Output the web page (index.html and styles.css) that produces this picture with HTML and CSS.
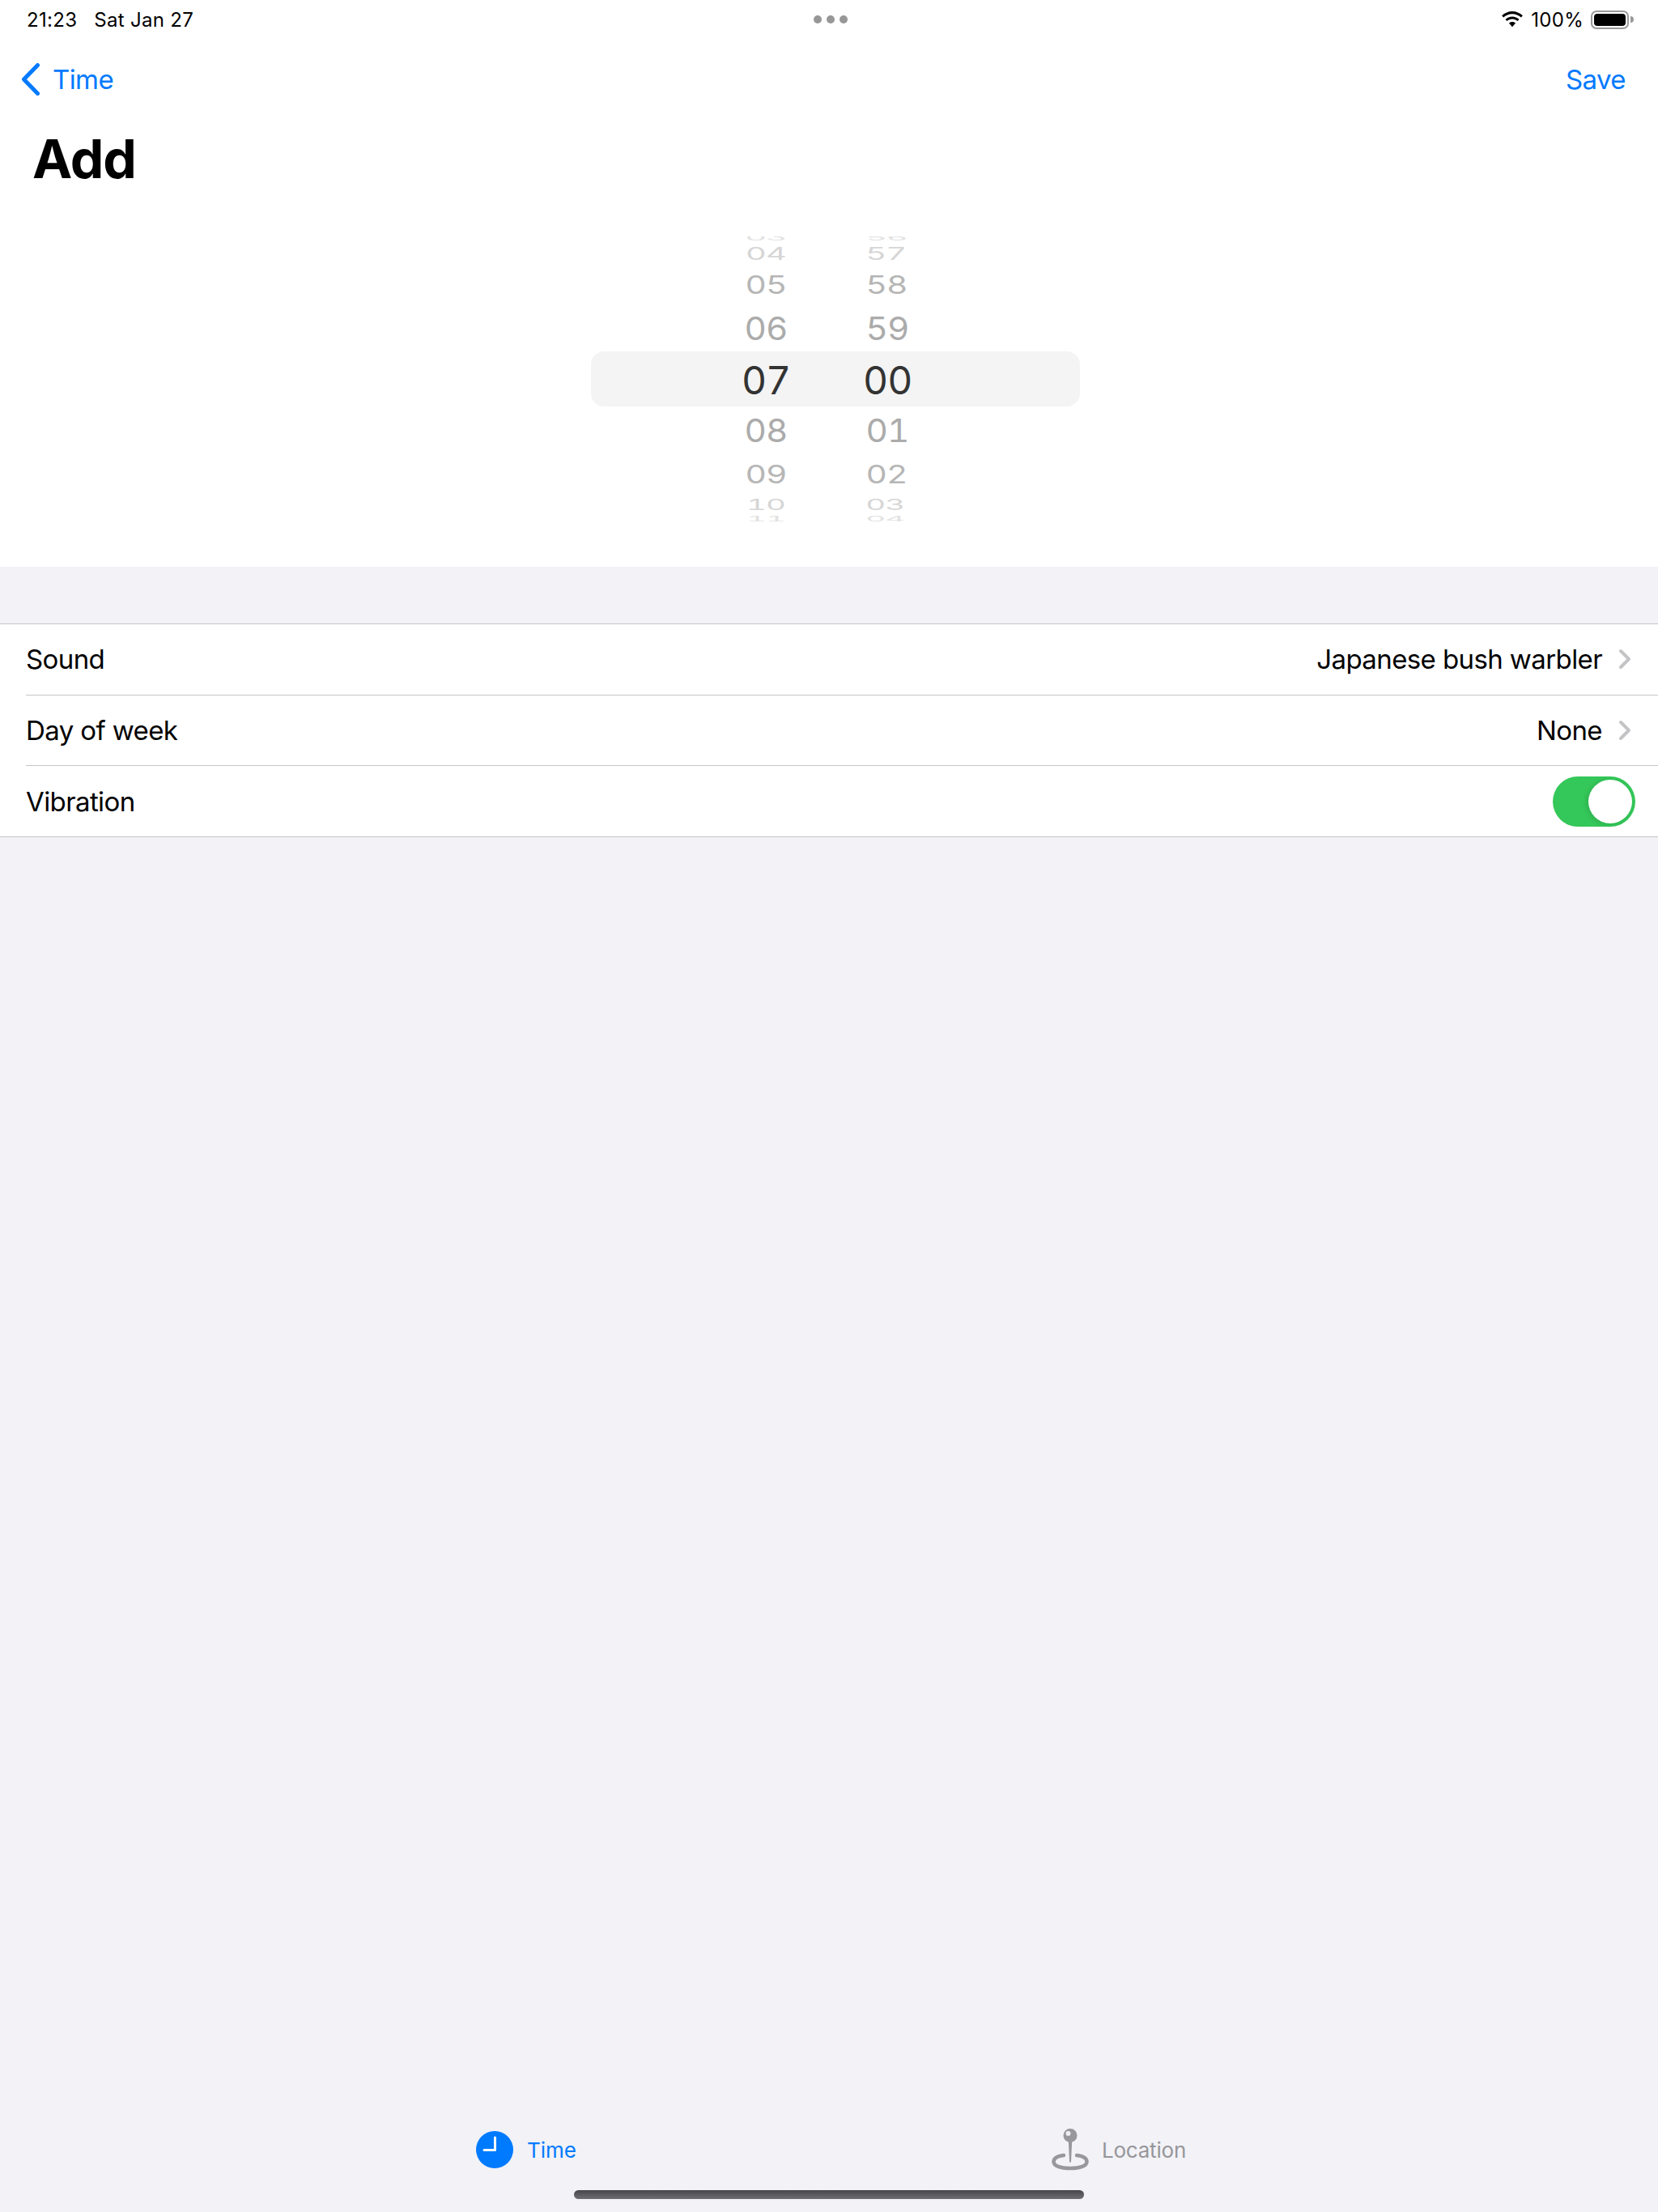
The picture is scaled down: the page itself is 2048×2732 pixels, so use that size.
FILE: index.html
```html
<!DOCTYPE html>
<html lang="en">
<head>
<meta charset="utf-8">
<title>Add</title>
<link rel="stylesheet" href="styles.css">
</head>
<body>
<div class="page">
  <header class="top">
    <div class="status">
      <div class="status-left"><span>21:23</span><span>Sat Jan 27</span></div>
      <div class="dots"><i></i><i></i><i></i></div>
      <div class="status-right">
        <svg class="wifi" width="28" height="20" viewBox="0 0 28 20"><path d="M14 3.200c4.200 0 8 1.600 10.900 4.300l2-2.200C23.300 2 18.900 0 14 0S4.700 2 1.100 5.300l2 2.200C6 4.800 9.800 3.200 14 3.200z"/><path d="M14 9.600c2.500 0 4.800 1 6.500 2.500l2-2.200C20.200 7.800 17.300 6.500 14 6.500s-6.200 1.300-8.500 3.400l2 2.200c1.700-1.500 4-2.500 6.500-2.500z"/><path d="M14 13c-1.600 0-3 .6-4.100 1.600L14 19.200l4.100-4.600C17 13.600 15.600 13 14 13z"/></svg>
        <span class="pct">100%</span>
        <div class="battery"><div class="battery-fill"></div></div>
        <div class="battery-nub"></div>
      </div>
    </div>
    <nav class="nav">
      <a class="nav-back">
        <svg class="back-icon" width="24" height="40" viewBox="0 0 24 40"><path d="M20.500 2.500L3.500 20l17 17.500" fill="none" stroke="#007aff" stroke-width="5" stroke-linecap="round" stroke-linejoin="round"/></svg>
        <span>Time</span>
      </a>
      <a class="nav-save">Save</a>
    </nav>
    <h1 class="title">Add</h1>
    <div class="picker">
      <div class="picker-band"></div>
      <div class="wheel wheel-hours">
        <div class="cell c0">03</div><div class="cell c1">04</div><div class="cell c2">05</div><div class="cell c3">06</div><div class="cell cur">07</div><div class="cell c4">08</div><div class="cell c5">09</div><div class="cell c6">10</div><div class="cell c7">11</div>
      </div>
      <div class="wheel wheel-mins">
        <div class="cell c0">56</div><div class="cell c1">57</div><div class="cell c2">58</div><div class="cell c3">59</div><div class="cell cur">00</div><div class="cell c4">01</div><div class="cell c5">02</div><div class="cell c6">03</div><div class="cell c7">04</div>
      </div>
    </div>
  </header>
  <main class="main">
    <section class="group">
      <div class="row">
        <span class="label">Sound</span>
        <span class="value">Japanese bush warbler</span>
        <svg class="chev" width="20" height="26" viewBox="0 0 20 26"><path d="M5 3l10 10L5 23" fill="none" stroke="#c4c4c7" stroke-width="4" stroke-linecap="round" stroke-linejoin="round"/></svg>
      </div>
      <div class="row">
        <span class="label">Day of week</span>
        <span class="value">None</span>
        <svg class="chev" width="20" height="26" viewBox="0 0 20 26"><path d="M5 3l10 10L5 23" fill="none" stroke="#c4c4c7" stroke-width="4" stroke-linecap="round" stroke-linejoin="round"/></svg>
      </div>
      <div class="row row-last">
        <span class="label">Vibration</span>
        <div class="toggle"><div class="knob"></div></div>
      </div>
    </section>
  </main>
  <footer class="tabs">
    <div class="tab tab-on">
      <svg width="46" height="46" viewBox="0 0 46 46"><circle cx="23" cy="23" r="23" fill="#007aff"/><path d="M23.500 8v15.500H10" fill="none" stroke="#fff" stroke-width="3" stroke-linecap="round" stroke-linejoin="round"/></svg>
      <span>Time</span>
    </div>
    <div class="tab">
      <svg width="46" height="52" viewBox="0 0 46 52"><path d="M15 33C7 34 2.500 37 2.500 41c0 5 8.500 8 20.500 8s20.500-3 20.500-8c0-4-4.500-7-12.500-8" fill="none" stroke="#98989c" stroke-width="4.500" stroke-linecap="round"/><path d="M20.800 15h4.400l-1.200 26q-1 1.500-2 0z" fill="#98989c"/><circle cx="23" cy="8.500" r="8.500" fill="#98989c"/><circle cx="20.500" cy="6" r="3" fill="#eeeef2"/></svg>
      <span class="tab-label">Location</span>
    </div>
  </footer>
  <div class="home-wrap"><div class="home"></div></div>
</div>
</body>
</html>
```
FILE: styles.css
```css
* { box-sizing: border-box; }
html, body { margin: 0; padding: 0; }
body { font-family: Inter, "Liberation Sans", sans-serif; color: #000; background: #f2f2f7; }
.page { width: 2048px; height: 2732px; display: flex; flex-direction: column; overflow: hidden; }

.top { background: #fff; height: 700px; flex: none; }

.status { height: 48px; display: flex; align-items: center; justify-content: space-between; padding: 0 30px 0 33px; font-size: 24px; letter-spacing: .3px; }
.status-left { display: flex; gap: 21px; width: 400px; }
.dots { display: flex; gap: 6px; }
.dots i { width: 10px; height: 10px; border-radius: 50%; background: #979797; }
.status-right { display: flex; align-items: center; width: 400px; justify-content: flex-end; }
.wifi { margin-right: 9px; }
.pct { margin-right: 9px; }
.battery { width: 47px; height: 23px; border: 2px solid #9a9a9a; border-radius: 7px; padding: 2px; }
.battery-fill { width: 100%; height: 100%; background: #000; border-radius: 4px; }
.battery-nub { width: 4px; height: 8px; margin-left: 2px; background: #9a9a9a; border-radius: 0 4px 4px 0; }

.nav { height: 100px; display: flex; align-items: center; justify-content: space-between; padding: 0 40px 0 26px; font-size: 33px; letter-spacing: -.6px; color: #007aff; }
.nav-back { display: flex; align-items: center; gap: 15px; }
.title { margin: 0 0 0 40px; height: 96px; line-height: 96px; font-size: 66px; font-weight: 700; letter-spacing: -1px; }

.picker { position: relative; margin: 48px 0 0 730px; width: 604px; height: 352px; display: flex; padding-left: 167px; gap: 71px; overflow: hidden; font-size: 48px; letter-spacing: -1px; font-variant-numeric: tabular-nums; }
.picker-band { position: absolute; left: 0; right: 0; top: 142px; height: 68px; background: #f4f4f4; border-radius: 16px; }
.wheel { position: relative; width: 98px; display: flex; flex-direction: column; }
.cell { flex: none; display: flex; align-items: center; justify-content: center; white-space: nowrap; }
.wheel-mins .cell { justify-content: flex-start; transform-origin: left center; padding-left: 4px; }
.wheel-mins .cur { padding-left: 0; }
.c0 { height: 12px; margin-top: -5px; color: #e2e2e2; transform: scale(.85, .22); }
.c1 { height: 28px; color: #d6d6d6; transform: scale(.83, .45); }
.c2 { height: 48px; color: #b6b6b6; transform: scale(.85, .65); }
.c3 { height: 60px; color: #ababab; transform: scale(.88, .83); }
.cur { height: 68px; color: #333; }
.c4 { height: 56px; color: #ababab; transform: scale(.88, .83); }
.c5 { height: 52px; color: #b6b6b6; transform: scale(.85, .65); }
.c6 { height: 24px; color: #d6d6d6; transform: scale(.8, .4); }
.c7 { height: 12px; color: #e2e2e2; transform: scale(.8, .18); }

.main { flex: 1; padding-top: 70px; }
.group { background: #fff; border-top: 1px solid #c6c6c8; border-bottom: 1px solid #c6c6c8; }
.row { height: 87.5px; margin-left: 32px; padding-right: 28px; display: flex; align-items: center; border-bottom: 1px solid #c6c6c8; font-size: 33px; letter-spacing: -.6px; }
.row + .row .label, .row + .row .value { margin: 1px 0 0; }
.row-last { height: 87px; margin-left: 0; padding-left: 32px; border-bottom: 0; }
.label { flex: 1; margin-bottom: 1px; }
.value { margin-bottom: 1px; }
.chev { margin-left: 18px; margin-right: 3px; }
.toggle { width: 102px; height: 62px; border-radius: 31px; background: #34c759; padding: 4px; display: flex; justify-content: flex-end; }
.knob { width: 54px; height: 54px; border-radius: 50%; background: #fff; box-shadow: -2px 1px 6px rgba(0,0,0,.12); }

.tabs { flex: none; height: 72px; padding: 0 0 8px 284px; display: grid; grid-template-columns: 732px 732px; font-size: 26px; color: #96969a; }
.tab { display: flex; align-items: center; justify-content: center; gap: 17px; }
.tab-on { color: #007aff; }
.tab-label { letter-spacing: -.2px; margin-left: -1px; }
.home-wrap { flex: none; height: 37px; padding: 10px 0 0 709px; }
.home { width: 630px; height: 11px; border-radius: 6px; background: linear-gradient(#47474a, #6f6f72); }
```
